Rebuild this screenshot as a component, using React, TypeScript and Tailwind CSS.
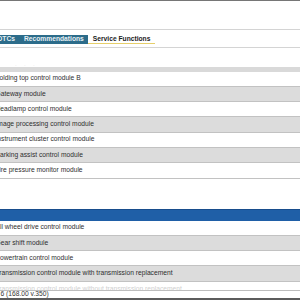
import React from 'react';

const FIRST_GROUP = [
  'Folding top control module B',
  'Gateway module',
  'Headlamp control module',
  'Image processing control module',
  'Instrument cluster control module',
  'Parking assist control module',
  'Tire pressure monitor module',
];

const SECOND_GROUP = [
  'All wheel drive control module',
  'Gear shift module',
  'Powertrain control module',
  'Transmission control module with transmission replacement',
];

const TABS = [
  { label: 'DTCs', active: false },
  { label: 'Recommendations', active: false },
  { label: 'Service Functions', active: true },
];

function Row({ label, shaded }: { label: string; shaded: boolean }) {
  return (
    <div
      className={[
        'h-[15.3px] flex items-center border-b border-[#c2c2c2] overflow-hidden whitespace-nowrap',
        shaded ? 'bg-[#dcdcdc]' : 'bg-white',
      ].join(' ')}
    >
      <span className="ml-[-4.5px] text-[6.7px] leading-none text-[#2e2e2e]">{label}</span>
    </div>
  );
}

export default function App() {
  return (
    <div
      className="relative w-[300px] h-[300px] overflow-hidden bg-white"
      style={{ fontFamily: '"Liberation Sans", Arial, sans-serif' }}
    >
      {/* window top edge */}
      <div className="h-px bg-[#767676]" />
      <div className="h-[28px]" />

      {/* tab strip */}
      <div className="h-[19px] border-y border-[#d4d4d4] pt-[5px]">
        <div className="flex items-start ml-[-7px]">
          {TABS.map(tab => (
            <div
              key={tab.label}
              className={[
                'h-[9px] px-[4.5px] flex items-center text-[6.7px] font-bold leading-none whitespace-nowrap',
                tab.active
                  ? 'bg-white text-[#1b1b1b] border-b border-[#e6cf6a]'
                  : 'bg-[#2c6c8a] text-[#e8f1f5]',
              ].join(' ')}
            >
              {tab.label}
            </div>
          ))}
        </div>
      </div>

      {/* scrolled-off caption */}
      <div className="h-[19px] relative">
        <span className="absolute left-[15px] top-[15px] text-[5px] leading-none text-[#e2e2e2] tracking-[3px]">
          · · ·
        </span>
      </div>
      <div className="h-[4.5px] bg-[#d9d9d9]" />

      {FIRST_GROUP.map((label, i) => (
        <Row key={label} label={label} shaded={i % 2 === 1} />
      ))}

      <div className="h-[30px]" />

      {/* group header */}
      <div className="h-[12px] bg-[#1f5fa7] border-t border-[#184d8c]" />

      {SECOND_GROUP.map((label, i) => (
        <Row key={label} label={label} shaded={i % 2 === 1} />
      ))}
      <div className="h-[15px] bg-white overflow-hidden whitespace-nowrap flex items-center">
        <span className="ml-[-4.5px] text-[6.7px] leading-none text-[#cfcfcf]">
          Transmission control module without transmission replacement
        </span>
      </div>

      {/* status footer */}
      <div className="absolute left-0 right-0 bottom-0">
        <div className="h-[8px] bg-white border-t border-[#bdbdbd] flex items-center overflow-hidden whitespace-nowrap">
          <span className="ml-[0.5px] text-[6.7px] leading-none text-[#333]">6 (168.00 v.350)</span>
        </div>
        <div className="h-[2px] bg-[#5c5c5c]" />
      </div>
    </div>
  );
}
